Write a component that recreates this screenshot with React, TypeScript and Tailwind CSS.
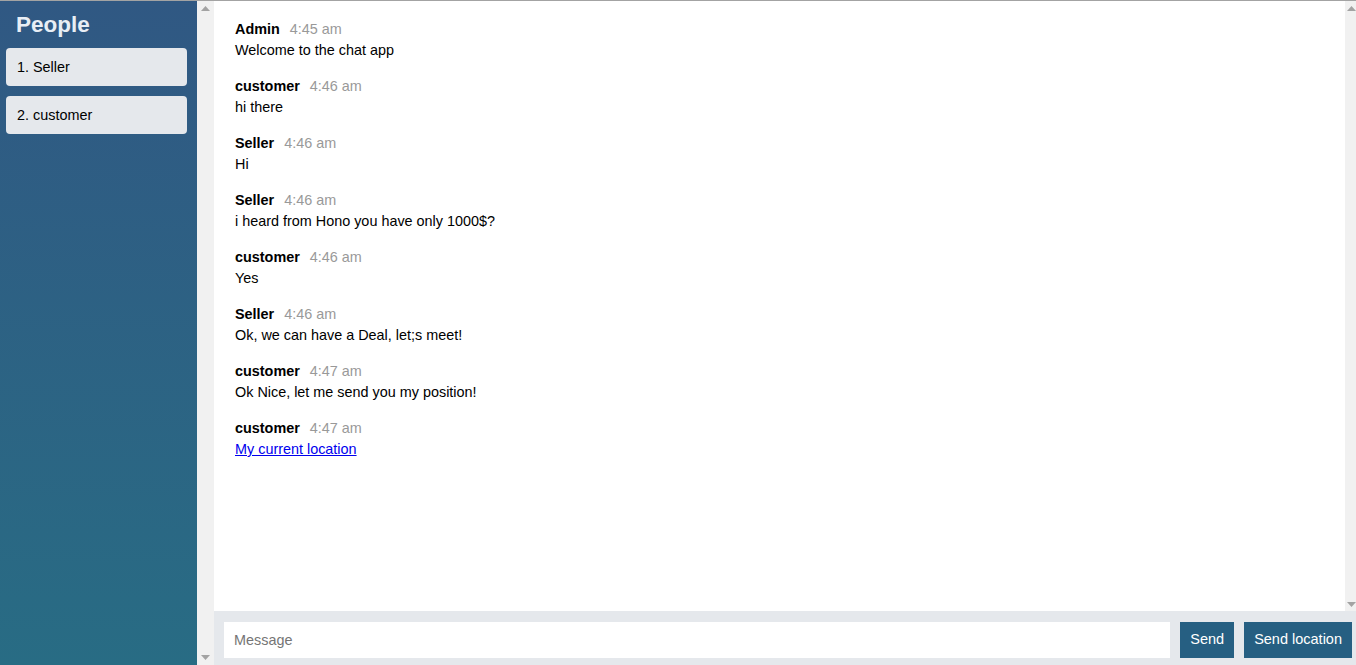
import React from "react";

const messages: { name: string; time: string; text: string; link?: boolean }[] = [
  { name: "Admin", time: "4:45 am", text: "Welcome to the chat app" },
  { name: "customer", time: "4:46 am", text: "hi there" },
  { name: "Seller", time: "4:46 am", text: "Hi" },
  { name: "Seller", time: "4:46 am", text: "i heard from Hono you have only 1000$?" },
  { name: "customer", time: "4:46 am", text: "Yes" },
  { name: "Seller", time: "4:46 am", text: "Ok, we can have a Deal, let;s meet!" },
  { name: "customer", time: "4:47 am", text: "Ok Nice, let me send you my position!" },
  { name: "customer", time: "4:47 am", text: "My current location", link: true },
];

function Up() {
  return (
    <svg width="9" height="5" viewBox="0 0 9 5">
      <polygon points="0,5 9,5 4.5,0" fill="#a3a3a3" />
    </svg>
  );
}
function Down() {
  return (
    <svg width="9" height="5" viewBox="0 0 9 5">
      <polygon points="0,0 9,0 4.5,5" fill="#a3a3a3" />
    </svg>
  );
}

export default function App() {
  return (
    <div
      className="flex h-[665px] w-[1356px] overflow-hidden border-t border-[#a3a3a3] text-[14.4px] text-black"
      style={{ fontFamily: '"Liberation Sans", Arial, sans-serif' }}
    >
      <aside className="flex w-[197px] flex-col bg-gradient-to-b from-[#305883] to-[#286c84] pl-[6px] pr-[10px]">
        <h2 className="mb-[11px] mt-[11px] pl-[10px] text-[22.5px] font-bold leading-[25px] text-[#e8eef5]">
          People
        </h2>
        <div className="flex flex-col gap-[10px]">
          <div className="flex h-[38px] items-center rounded-[4px] bg-[#e5e8ec] pl-[11px] pt-[1px]">1. Seller</div>
          <div className="flex h-[38px] items-center rounded-[4px] bg-[#e5e8ec] pl-[11px] pt-[1px]">2. customer</div>
        </div>
      </aside>
      <div className="flex w-[17px] flex-col items-center justify-between bg-[#f1f1f1] pb-[5px] pt-[5px]">
        <Up />
        <Down />
      </div>
      <main className="flex flex-1 flex-col">
        <div className="flex flex-1 min-h-0">
          <div className="flex-1 bg-white pl-[21px] pt-[18px]">
            {messages.map((m, i) => (
              <div key={i} className="mb-[15px]">
                <div className="leading-[21px]">
                  <span className="font-bold">{m.name}</span>
                  <span className="ml-[10px] text-[#999999]">{m.time}</span>
                </div>
                <div className="leading-[21px]">
                  {m.link ? (
                    <a href="#" className="text-[#0000ee] underline">
                      {m.text}
                    </a>
                  ) : (
                    m.text
                  )}
                </div>
              </div>
            ))}
          </div>
          <div className="flex w-[11px] flex-col items-end justify-between bg-[#f1f1f1] pb-[4px] pt-[5px]">
            <Up />
            <Down />
          </div>
        </div>
        <div className="flex h-[54px] items-start gap-[10px] bg-[#e5e8ec] pl-[10px] pr-[4px] pt-[11px]">
          <input
            className="h-[36px] flex-1 bg-white px-[10px] text-[14.4px] outline-none placeholder:text-[#757575]"
            placeholder="Message"
            style={{ fontFamily: '"Liberation Sans", Arial, sans-serif' }}
          />
          <button className="h-[36px] bg-[#265f82] px-[10px] text-[14.5px] text-white">Send</button>
          <button className="h-[36px] bg-[#265f82] px-[10px] text-[14.5px] text-white">Send location</button>
        </div>
      </main>
    </div>
  );
}
